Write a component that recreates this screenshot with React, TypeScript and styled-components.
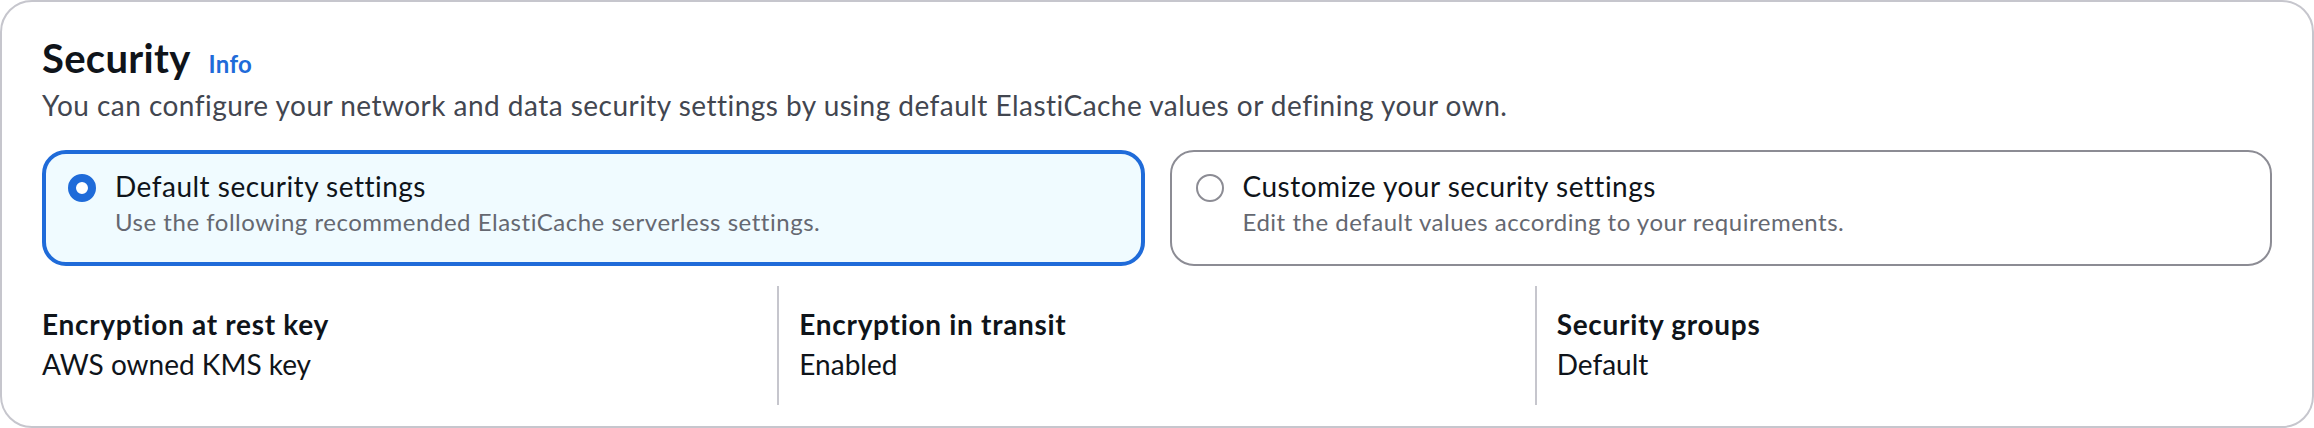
import React, { useState } from "react";
import styled, { createGlobalStyle } from "styled-components";

const GlobalStyle = createGlobalStyle`
    html, body {
        margin: 0;
        padding: 0;
        background: #ffffff;
    }
    body {
        font-family: Lato, "Open Sans", sans-serif;
        font-variant-ligatures: none;
        color: #0f141a;
    }
    * {
        box-sizing: border-box;
    }
`;

const options = [
    {
        id: "default",
        label: "Default security settings",
        description: "Use the following recommended ElastiCache serverless settings.",
    },
    {
        id: "custom",
        label: "Customize your security settings",
        description: "Edit the default values according to your requirements.",
    },
];

const details = [
    { key: "Encryption at rest key", value: "AWS owned KMS key" },
    { key: "Encryption in transit", value: "Enabled" },
    { key: "Security groups", value: "Default" },
];

const App: React.FC = () => {
    const [selected, setSelected] = useState("default");

    return (
        <>
            <GlobalStyle />
            <Container>
                <Header>
                    <Title>Security</Title>
                    <InfoLink href="#">Info</InfoLink>
                </Header>
                <Description>
                    You can configure your network and data security settings by using
                    default ElastiCache values or defining your own.
                </Description>
                <Tiles>
                    {options.map((option) => (
                        <Tile
                            key={option.id}
                            $selected={selected === option.id}
                            onClick={() => setSelected(option.id)}
                        >
                            <Radio $checked={selected === option.id} />
                            <TileText>
                                <TileLabel>{option.label}</TileLabel>
                                <TileDescription>{option.description}</TileDescription>
                            </TileText>
                        </Tile>
                    ))}
                </Tiles>
                <Columns>
                    {details.map((item) => (
                        <Column key={item.key}>
                            <Key>{item.key}</Key>
                            <Value>{item.value}</Value>
                        </Column>
                    ))}
                </Columns>
            </Container>
        </>
    );
};

export default App;

const Container = styled.section`
    width: 2314px;
    height: 428px;
    border: 2px solid #c6c6cd;
    border-radius: 32px;
    padding: 32px 40px 21px 40px;
    background: #ffffff;
`;
const Header = styled.div`
    display: flex;
    align-items: baseline;
    gap: 18px;
`;
const Title = styled.h2`
    margin: 0;
    font-size: 40px;
    line-height: 48px;
    font-weight: 700;
    letter-spacing: 0.3px;
    color: #0f141a;
`;
const InfoLink = styled.a`
    font-size: 24px;
    font-weight: 700;
    letter-spacing: 0.3px;
    color: #1f6bd9;
    text-decoration: none;
`;
const Description = styled.p`
    margin: 3px 0 0 0;
    font-size: 28px;
    line-height: 40px;
    letter-spacing: 0.47px;
    color: #424650;
`;
const Tiles = styled.div`
    display: grid;
    grid-template-columns: 1fr 1fr;
    gap: 25px;
    margin-top: 25px;
`;
const Tile = styled.div<{ $selected: boolean }>`
    display: flex;
    align-items: flex-start;
    gap: 19px;
    height: 116px;
    border-radius: 24px;
    cursor: pointer;
    border: ${(p) => (p.$selected ? "4px solid #1f6bd9" : "2px solid #8c8c94")};
    background: ${(p) => (p.$selected ? "#f0fbff" : "#ffffff")};
    padding: ${(p) => (p.$selected ? "12px 22px 0 22px" : "14px 24px 0 24px")};
`;
const Radio = styled.span<{ $checked: boolean }>`
    flex: none;
    width: 28px;
    height: 28px;
    margin-top: 8px;
    border-radius: 50%;
    border: ${(p) => (p.$checked ? "8px solid #1f6bd9" : "2px solid #8c8c94")};
    background: #ffffff;
`;
const TileText = styled.div`
    display: flex;
    flex-direction: column;
`;
const TileLabel = styled.span`
    font-size: 28px;
    line-height: 40px;
    letter-spacing: 0.5px;
    color: #0f141a;
`;
const TileDescription = styled.span`
    font-size: 24px;
    line-height: 32px;
    letter-spacing: 0.52px;
    color: #656871;
`;
const Columns = styled.div`
    display: grid;
    grid-template-columns: repeat(3, 1fr);
    margin: 20px -20px 0 -22px;
`;
const Column = styled.div`
    display: flex;
    flex-direction: column;
    border-left: 2px solid #c6c6cd;
    padding: 18px 0 21px 20px;

    &:first-child {
        border-left-color: transparent;
    }
`;
const Key = styled.span`
    font-size: 28px;
    line-height: 40px;
    font-weight: 700;
    letter-spacing: 0.7px;
    color: #0f141a;
`;
const Value = styled.span`
    font-size: 28px;
    line-height: 40px;
    letter-spacing: 0;
    color: #0f141a;
`;
